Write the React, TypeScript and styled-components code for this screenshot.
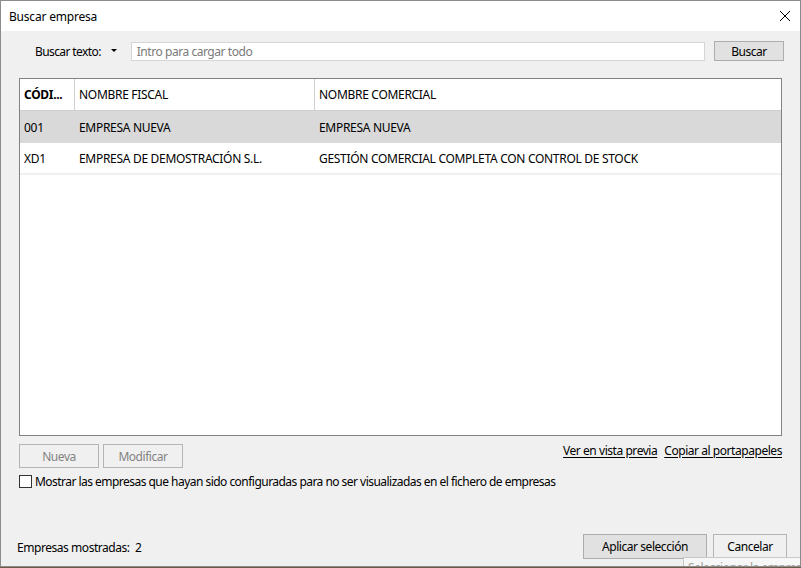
import styled, { createGlobalStyle } from "styled-components";

const Global = createGlobalStyle`
    html, body {
        margin: 0;
        padding: 0;
        background: #6b5a48;
    }
    body {
        font-family: "Noto Sans", "Segoe UI", sans-serif;
        font-size: 12px;
        letter-spacing: -0.45px;
        color: #000;
    }
`;

const Window = styled.div`
    position: relative;
    width: 801px;
    height: 567px;
    box-sizing: border-box;
    border: 1px solid #8c8c8c;
    display: flex;
    flex-direction: column;
    background: #f0f0f0;
    overflow: hidden;
`;

const TitleBar = styled.div`
    height: 30px;
    flex-shrink: 0;
    background: #fff;
    display: flex;
    align-items: center;
    justify-content: space-between;
    padding: 0 9px 0 8px;
`;

const Title = styled.span`
    font-size: 12px;
    letter-spacing: -0.2px;
`;

const Body = styled.div`
    flex: 1;
    display: flex;
    flex-direction: column;
    padding: 10px 16px 8px 18px;
`;

const SearchRow = styled.div`
    display: flex;
    align-items: center;
    height: 20px;
    padding-left: 16px;
`;

const Label = styled.span`
    white-space: nowrap;
    letter-spacing: -0.6px;
`;

const Arrow = styled.span`
    width: 0;
    height: 0;
    border-left: 3px solid transparent;
    border-right: 3px solid transparent;
    border-top: 3px solid #000;
    margin: 0 14px 2px 10px;
`;

const SearchInput = styled.div`
    flex: 1;
    height: 19px;
    box-sizing: border-box;
    border: 1px solid #d5d5d5;
    background: #fff;
    color: #7a7a7a;
    padding-left: 5px;
    display: flex;
    align-items: center;
    margin-right: 9px;
`;

interface BtnProps {
    $w: number;
    $h: number;
    $disabled?: boolean;
    $fill?: boolean;
}

const Button = styled.div<BtnProps>`
    width: ${p => p.$w}px;
    height: ${p => p.$h}px;
    box-sizing: border-box;
    border: 1px solid ${p => p.$fill ? "#adadad" : "#b4b4b4"};
    background: ${p => p.$fill ? "#e1e1e1" : "#f0f0f0"};
    color: ${p => p.$disabled ? "#838383" : "#000"};
    display: flex;
    align-items: center;
    justify-content: center;
    flex-shrink: 0;
`;

const Table = styled.div`
    margin-top: 17px;
    height: 358px;
    box-sizing: border-box;
    border: 1px solid #828282;
    background: #fff;
    margin-right: 2px;
    letter-spacing: -0.3px;
`;

interface RowProps {
    $selected?: boolean;
    $header?: boolean;
}

const Row = styled.div<RowProps>`
    display: grid;
    grid-template-columns: 55px 240px 1fr;
    height: 32px;
    background: ${p => p.$selected ? "#d9d9d9" : "#fff"};
    border-bottom: ${p => p.$header ? "1px solid #d0d0d0" : p.$selected ? "none" : "2px solid #f0f0f0"};
    box-sizing: border-box;
`;

interface CellProps {
    $header?: boolean;
    $bold?: boolean;
}

const Cell = styled.div<CellProps>`
    display: flex;
    align-items: center;
    padding-left: 4px;
    font-weight: ${p => p.$bold ? 700 : 400};
    border-right: ${p => p.$header ? "1px solid #d0d0d0" : "none"};
    white-space: nowrap;
    overflow: hidden;
    &:last-child {
        border-right: none;
    }
`;

const ActionRow = styled.div`
    display: flex;
    align-items: flex-start;
    gap: 4px;
    margin-top: 8px;
    margin-right: 2px;
`;

const Links = styled.div`
    margin-left: auto;
    display: flex;
    gap: 7px;
    line-height: 14px;
`;

const Link = styled.span`
    text-decoration: underline;
    text-underline-offset: 2px;
`;

const CheckRow = styled.label`
    display: flex;
    align-items: center;
    gap: 3px;
    margin-top: 5px;
    letter-spacing: -0.53px;
`;

const Box = styled.span`
    width: 13px;
    height: 13px;
    box-sizing: border-box;
    border: 1px solid #333;
    background: #fff;
`;

const Footer = styled.div`
    margin-top: auto;
    display: flex;
    align-items: center;
    gap: 6px;
    margin-left: -2px;
    margin-right: -3px;
    margin-bottom: -1px;
`;

const Count = styled.span`
    margin-right: auto;
    white-space: pre;
    padding-top: 1px;
`;

const Tooltip = styled.div`
    position: absolute;
    left: 682px;
    top: 556px;
    width: 130px;
    height: 20px;
    border: 1px solid #c8c8c8;
    background: #f7f7f7;
    color: #a0a0a0;
    padding: 1px 4px;
    box-sizing: border-box;
    white-space: nowrap;
`;

const rows = [
    { code: "001", fiscal: "EMPRESA NUEVA", comercial: "EMPRESA NUEVA", selected: true },
    { code: "XD1", fiscal: "EMPRESA DE DEMOSTRACIÓN S.L.", comercial: "GESTIÓN COMERCIAL COMPLETA CON CONTROL DE STOCK", selected: false },
];

export default function App() {
    return (
        <>
            <Global />
            <Window>
                <TitleBar>
                    <Title>Buscar empresa</Title>
                    <svg width="12" height="12" viewBox="0 0 12 12">
                        <path d="M1 1 L11 11 M11 1 L1 11" stroke="#000" strokeWidth="1" />
                    </svg>
                </TitleBar>
                <Body>
                    <SearchRow>
                        <Label>Buscar texto:</Label>
                        <Arrow />
                        <SearchInput>Intro para cargar todo</SearchInput>
                        <Button $w={70} $h={20} $fill>Buscar</Button>
                    </SearchRow>
                    <Table>
                        <Row $header>
                            <Cell $header $bold>CÓDI...</Cell>
                            <Cell $header>NOMBRE FISCAL</Cell>
                            <Cell $header>NOMBRE COMERCIAL</Cell>
                        </Row>
                        {rows.map(r => (
                            <Row key={r.code} $selected={r.selected}>
                                <Cell>{r.code}</Cell>
                                <Cell>{r.fiscal}</Cell>
                                <Cell>{r.comercial}</Cell>
                            </Row>
                        ))}
                    </Table>
                    <ActionRow>
                        <Button $w={80} $h={24} $disabled>Nueva</Button>
                        <Button $w={80} $h={24} $disabled>Modificar</Button>
                        <Links>
                            <Link>Ver en vista previa</Link>
                            <Link>Copiar al portapapeles</Link>
                        </Links>
                    </ActionRow>
                    <CheckRow>
                        <Box />
                        Mostrar las empresas que hayan sido configuradas para no ser visualizadas en el fichero de empresas
                    </CheckRow>
                    <Footer>
                        <Count>Empresas mostradas:  2</Count>
                        <Button $w={124} $h={25} $fill>Aplicar selección</Button>
                        <Button $w={74} $h={25}>Cancelar</Button>
                    </Footer>
                </Body>
                <Tooltip>Seleccionar la empresa</Tooltip>
            </Window>
        </>
    );
}
